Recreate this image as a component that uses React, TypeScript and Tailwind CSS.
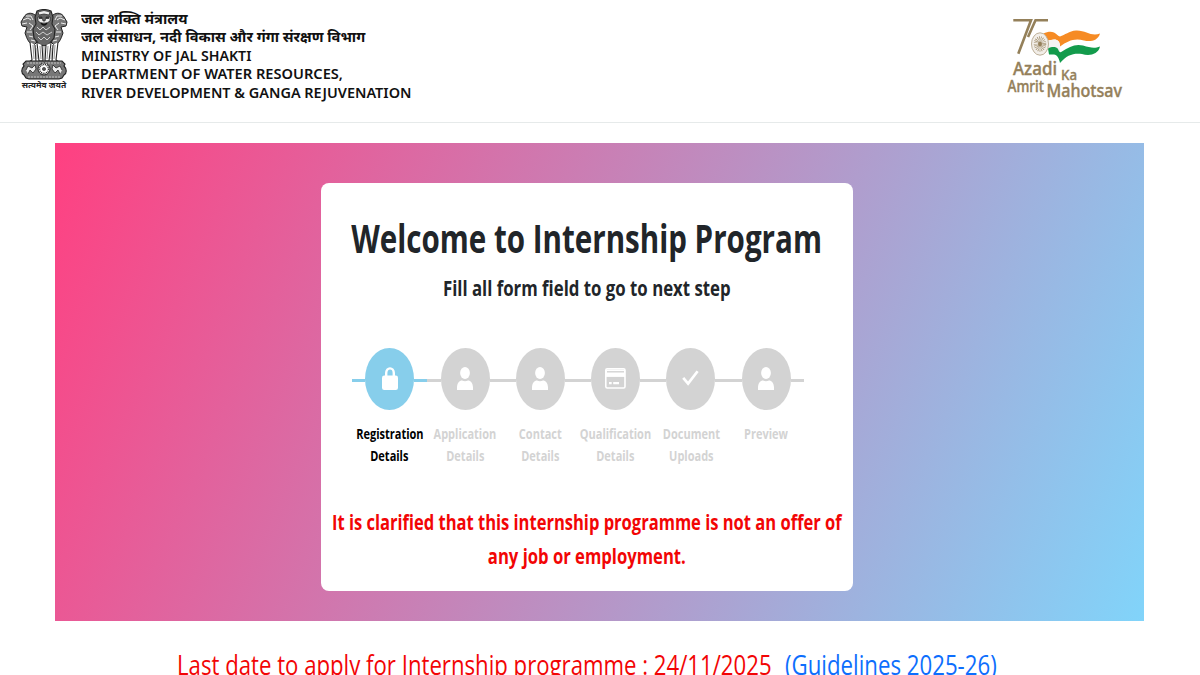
import React from "react";

type IconName = "lock" | "person" | "card" | "check";

type Step = {
  icon: IconName;
  label: string[];
};

const steps: Step[] = [
  { icon: "lock", label: ["Registration", "Details"] },
  { icon: "person", label: ["Application", "Details"] },
  { icon: "person", label: ["Contact", "Details"] },
  { icon: "card", label: ["Qualification", "Details"] },
  { icon: "check", label: ["Document", "Uploads"] },
  { icon: "person", label: ["Preview"] },
];

function StepIcon({ name }: { name: IconName }) {
  if (name === "lock") {
    return (
      <svg width="16" height="23" viewBox="0 0 16 23" fill="none" className="-mt-0.5">
        <path d="M4.2 10V6C4.2 -0.2 11.8 -0.2 11.8 6V10" stroke="#fff" strokeWidth="2.4" />
        <rect x="0" y="8.6" width="16" height="14.4" rx="2.2" fill="#fff" />
      </svg>
    );
  }
  if (name === "card") {
    return (
      <svg width="21" height="21" viewBox="0 0 21 21" fill="none" className="-mt-0.5">
        <rect x="0.8" y="0.8" width="19.2" height="19.2" rx="1.4" stroke="#fff" strokeWidth="1.6" />
        <path d="M1 5.2H20" stroke="#fff" strokeWidth="7.4" />
        <path d="M2 3.8H19" stroke="#d3d3d3" strokeWidth="1.4" />
        <path d="M4 15.1H6.7M8.2 15.1H14" stroke="#fff" strokeWidth="2.2" />
      </svg>
    );
  }
  if (name === "check") {
    return (
      <svg width="17" height="16" viewBox="0 0 17 16" fill="none" className="-mt-0.5">
        <path d="M1.2 7.8L6.1 13.6L15.6 1.2" stroke="#fff" strokeWidth="2.7" />
      </svg>
    );
  }
  return (
    <svg width="16" height="23" viewBox="0 0 16 23" fill="#fff" className="-mt-0.5">
      <ellipse cx="8" cy="6" rx="4.9" ry="6" />
      <path d="M0 23V20.5C0 15.6 2.6 13.4 5 13.4Q8 15 11 13.4C13.4 13.4 16 15.6 16 20.5V23Z" />
    </svg>
  );
}

function Emblem() {
  return (
    <svg width="48" height="71" viewBox="0 0 48 71" fill="none" stroke="#222">
      {/* side lions */}
      <path d="M15 6C11 3 6 4 4 8L1 13L2 17L7 18L5 24C7 30 9 35 14 36L20 30V10Z" fill="#777" strokeWidth="1" />
      <path d="M33 6C37 3 42 4 44 8L47 13L46 17L41 18L43 24C41 30 39 35 34 36L28 30V10Z" fill="#777" strokeWidth="1" />
      <path d="M3 11L8 9L11 11M2 15L7 14M6 7L11 7L13 11M9 14L13 17L10 21M7 23L12 23M9 27L13 28M11 31L15 32" stroke="#eee" strokeWidth="1" />
      <path d="M45 11L40 9L37 11M46 15L41 14M42 7L37 7L35 11M39 14L35 17L38 21M41 23L36 23M39 27L35 28M37 31L33 32" stroke="#eee" strokeWidth="1" />
      {/* front lion */}
      <path d="M17 2Q24 -1 31 2L33 8L32 15L35 20L34 29L29 35L24 37L19 35L14 29L13 20L16 15L15 8Z" fill="#666" strokeWidth="1.1" />
      <path d="M18 3Q24 0 30 3L29 6L24 5L19 6ZM18 8L22 8L23 12H25L26 8L30 8L30 12L27 14H21L18 12Z" fill="#eee" strokeWidth="0.7" />
      <path d="M19 9H22M26 9H29M21 14Q24 18 27 14" stroke="#111" strokeWidth="1.3" />
      <path d="M17 18L20 21L23 18L26 21L30 18M16 23L19 26L23 23L27 26L32 23M18 28L21 31L24 28L27 31L30 28" stroke="#ddd" strokeWidth="0.9" />
      {/* legs */}
      <path d="M10 33L12 51L9 53H16L15 36M17 34L19 52H23L22 36M31 34L29 52H25L26 36M38 33L36 51L39 53H32L33 36" fill="#fff" strokeWidth="1.1" />
      <path d="M13 36L14 50M20 37L21 50M28 37L27 50M35 36L34 50M17 39V50M31 39V50M24 38V52" stroke="#777" strokeWidth="0.8" />
      {/* abacus */}
      <path d="M6 52H42L45 55L44 57C47 60 47 64 44 66L42 69L39 70H9L6 69L4 66C1 64 1 60 4 57L3 55Z" fill="#777" strokeWidth="1.1" />
      <circle cx="24" cy="60" r="6" fill="#fff" />
      <circle cx="24" cy="60" r="4.5" strokeWidth="1.5" strokeDasharray="1 0.8" />
      <circle cx="24" cy="60" r="1.6" fill="#555" strokeWidth="0.6" />
      <path d="M6 61L8 57L12 59L15 56L16 60L13 64L10 61L8 65M42 61L40 57L36 59L33 56L32 60L35 64L38 61L40 65" fill="#eee" strokeWidth="0.8" />
      <path d="M7 54H41M8 68H40" stroke="#ccc" strokeWidth="0.9" strokeDasharray="2 1" />
    </svg>
  );
}

function AzadiLogo() {
  return (
    <svg width="120" height="88" viewBox="0 0 120 88" fill="none">
      <path d="M6.3 5.3H24L11.3 38.7" stroke="#94805a" strokeWidth="2.6" />
      <path d="M41 5.3H28.5L21 22" stroke="#94805a" strokeWidth="2.6" />
      <path d="M36 18.7C41 16.5 44 16.5 47 17.5C50 19 51 21 53 21.5C58 20 62 16 69 15.5C79 15 84 22 93 18.5C91 26 83 27 77 25.5C67 23 61 26 53 31.5C53 27 51 24.5 47 24.5L41 25.5Z" fill="#f68b24" />
      <path d="M41 25.5L47 24.5C51 24.5 53 27 53 31.5V37L49 33H41Z" fill="#f3f3f3" />
      <path d="M41 33.5C45 31.5 49 31.5 51 34C52 37 53 38 55 36.5C62 32 68 28.5 76 30.5C83 32.5 87 34 93 31.5C91 40 82 41 75 39C66 38 60 40 53 48C52 43 50 40 47 39.5H42Z" fill="#139b4c" />
      <ellipse cx="33" cy="29" rx="8.5" ry="11.2" fill="#f2eee9" stroke="#b5a78d" strokeWidth="0.9" />
      <ellipse cx="33" cy="29" rx="4" ry="5.4" stroke="#94805a" strokeWidth="4.5" strokeDasharray="0.5 0.9" />
      <ellipse cx="33" cy="29" rx="2" ry="2.7" fill="#94805a" />
      <g fill="#94805a" stroke="#94805a" strokeWidth="0.4" fontFamily="'Noto Sans', sans-serif" fontWeight="500">
        <text x="6" y="59.5" fontSize="18.5" textLength="44" lengthAdjust="spacingAndGlyphs">Azadi</text>
        <text x="54" y="65" fontSize="15" textLength="16" lengthAdjust="spacingAndGlyphs">Ka</text>
        <text x="0.5" y="77" fontSize="15.5" textLength="36.5" lengthAdjust="spacingAndGlyphs">Amrit</text>
        <text x="39.5" y="82" fontSize="18" textLength="75.5" lengthAdjust="spacingAndGlyphs">Mahotsav</text>
      </g>
    </svg>
  );
}

function Header() {
  return (
    <header className="flex h-[123px] justify-between border-b border-[#e6eaea] pl-5 pr-[73px]">
      <div className="flex">
        <div className="flex w-12 flex-col items-center pt-[9px]">
          <Emblem />
          <span className="-mt-px whitespace-nowrap text-[8.5px] font-bold leading-[11px] text-[#222]">
            सत्यमेव जयते
          </span>
        </div>
        <div className="flex flex-col items-start whitespace-nowrap pl-[12.5px] pt-[10px] text-[14.4px] font-semibold leading-[18.4px] text-[#111]">
          <span className="origin-left scale-x-[1.025] font-bold">जल शक्ति मंत्रालय</span>
          <span className="origin-left scale-x-[1.017] font-bold">जल संसाधन, नदी विकास और गंगा संरक्षण विभाग</span>
          <span className="origin-left scale-x-[0.985]">MINISTRY OF JAL SHAKTI</span>
          <span className="origin-left scale-x-[1.015]">DEPARTMENT OF WATER RESOURCES,</span>
          <span className="origin-left scale-x-[1.003]">RIVER DEVELOPMENT &amp; GANGA REJUVENATION</span>
        </div>
      </div>
      <div className="pt-[15px]">
        <AzadiLogo />
      </div>
    </header>
  );
}

export default function App() {
  return (
    <div className="h-screen overflow-hidden bg-white font-['Noto_Sans','Open_Sans',sans-serif]">
      <Header />
      <main className="ml-[54.5px] mt-5 w-[1089px]">
        <section className="h-[478px] bg-[linear-gradient(114deg,#ff4081,#81d4fa)] pl-[266.5px] pt-10">
          <div className="flex h-[408px] w-[532px] flex-col items-center whitespace-nowrap rounded-lg bg-white pt-[28px] font-['Open_Sans',sans-serif]">
            <h1 className="scale-x-[0.758] text-[39px] font-bold leading-[53px] text-[#212529]">
              Welcome to Internship Program
            </h1>
            <p className="mt-2 scale-x-[0.8] text-[21px] font-bold leading-[32px] text-[#212529]">
              Fill all form field to go to next step
            </p>
            <ul className="ml-[31px] mt-[44px] flex w-[452px] self-start">
              {steps.map((step, i) => (
                <li
                  key={i}
                  className={`flex min-w-0 flex-1 flex-col items-center text-[14px] font-bold leading-[22.4px] ${
                    i === 0 ? "text-black" : "text-[#d3d3d3]"
                  }`}
                >
                  <div className="flex w-full items-center">
                    <div className={`mt-[3px] h-[2.5px] flex-1 ${i === 0 ? "bg-[#87ceeb]" : "bg-[#d3d3d3]"}`} />
                    <div
                      className={`flex h-[62px] w-[49px] items-center justify-center rounded-[50%] ${
                        i === 0 ? "bg-[#87ceeb]" : "bg-[#d3d3d3]"
                      }`}
                    >
                      <StepIcon name={step.icon} />
                    </div>
                    <div className={`mt-[3px] h-[2.5px] flex-1 ${i === 0 ? "bg-[#87ceeb]" : "bg-[#d3d3d3]"}`} />
                  </div>
                  <div className="flex w-full flex-col items-center pt-[13px]">
                    {step.label.map((line) => (
                      <span key={line} className="scale-x-[0.785]">
                        {line}
                      </span>
                    ))}
                  </div>
                </li>
              ))}
            </ul>
            <div className="mt-[37px] flex flex-col items-center text-[21px] font-bold leading-[34px] text-[#f20505]">
              <span className="scale-x-[0.787]">It is clarified that this internship programme is not an offer of</span>
              <span className="scale-x-[0.793]">any job or employment.</span>
            </div>
          </div>
        </section>
        <div className="mt-[24px] flex whitespace-nowrap pl-[122px] font-['Open_Sans',sans-serif] text-[28px] leading-[38px]">
          <div className="w-[608.5px]">
            <span className="inline-block origin-left scale-x-[0.792] text-[#f20505]">
              Last date to apply for Internship programme : 24/11/2025
            </span>
          </div>
          <a className="inline-block origin-left scale-x-[0.794] text-[#0d6efd]">(Guidelines 2025-26)</a>
        </div>
      </main>
    </div>
  );
}
